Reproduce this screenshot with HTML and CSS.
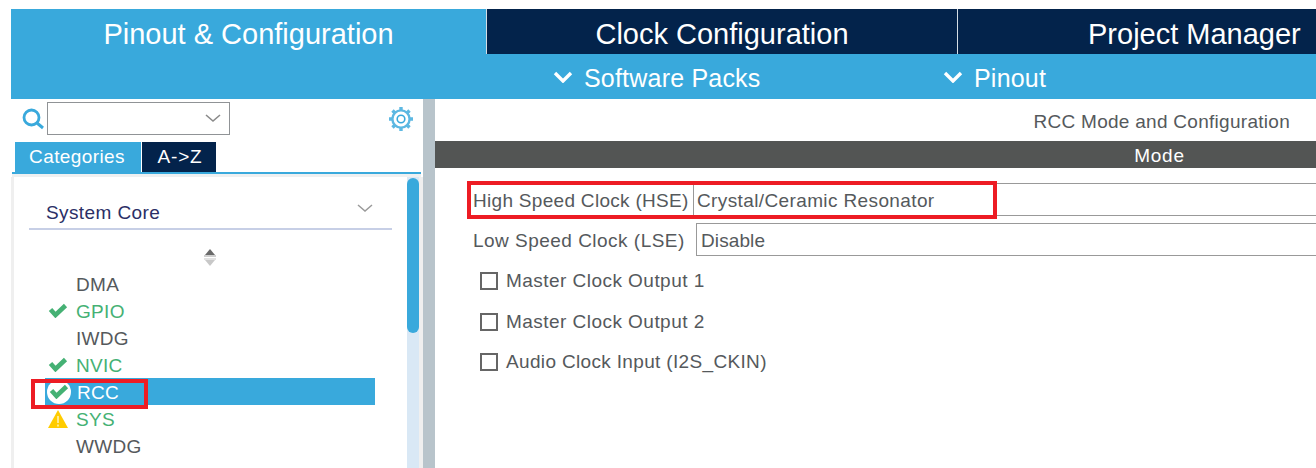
FILE: index.html
```html
<!DOCTYPE html>
<html lang="en">
<head>
<meta charset="utf-8">
<title>RCC Mode and Configuration</title>
<link rel="stylesheet" href="styles.css">
</head>
<body>
<header class="header">
  <nav class="tabs">
    <div class="tab tab-active">Pinout &amp; Configuration</div>
    <div class="tab tab-clock">Clock Configuration</div>
    <div class="tab tab-project">Project Manager</div>
  </nav>
  <div class="submenu">
    <div class="submenu-item submenu-packs">
      <svg class="submenu-chevron" viewBox="0 0 20 12"><path d="M2 2l8 8 8-8" fill="none" stroke="#fff" stroke-width="3.4"/></svg>
      <span>Software Packs</span>
    </div>
    <div class="submenu-item">
      <svg class="submenu-chevron" viewBox="0 0 20 12"><path d="M2 2l8 8 8-8" fill="none" stroke="#fff" stroke-width="3.4"/></svg>
      <span>Pinout</span>
    </div>
  </div>
</header>
<main class="main">
  <aside class="side">
    <div class="search">
      <svg class="search-icon" viewBox="0 0 22 22"><circle cx="9.5" cy="9.5" r="7.5" fill="none" stroke="#39a9dc" stroke-width="2.8"/><path d="M15 15l6 5" stroke="#39a9dc" stroke-width="3" fill="none"/></svg>
      <div class="search-box">
        <svg class="select-chevron" viewBox="0 0 16 9"><path d="M1 1l7 6 7-6" fill="none" stroke="#8a8a8a" stroke-width="1.6"/></svg>
      </div>
      <svg class="gear" viewBox="0 0 26 26">
        <circle cx="13" cy="13" r="8.6" fill="none" stroke="#5db8e2" stroke-width="2.4"/>
        <circle cx="13" cy="13" r="3.8" fill="none" stroke="#39a9dc" stroke-width="1.6"/>
        <path d="M13 1v3.500M13 21.500v3.500M1 13h3.500M21.500 13h3.500M4.500 4.500l2.500 2.500M19 19l2.500 2.500M21.500 4.500l-2.500 2.500M7 19l-2.500 2.500" stroke="#5db8e2" stroke-width="3.400" fill="none"/>
      </svg>
    </div>
    <div class="side-tabs">
      <div class="side-tab side-tab-active">Categories</div>
      <div class="side-tab side-tab-az">A-&gt;Z</div>
    </div>
    <div class="side-rule"></div>
    <div class="list-wrap">
      <div class="list">
        <div class="group">
          <span>System Core</span>
          <svg class="group-chevron" viewBox="0 0 16 9"><path d="M1 1l7 6 7-6" fill="none" stroke="#9a9a9a" stroke-width="1.500"/></svg>
        </div>
        <div class="sort">
          <svg class="sort-icon" viewBox="0 0 14 17"><path d="M7 0l5 6H2z" fill="#6a6a6a"/><path d="M1 6h12v2H1z" fill="#cfcfcf"/><path d="M1 9h12v2H1z" fill="#e2e2e2"/><path d="M2 11h10l-5 6z" fill="#c8c8c8"/></svg>
        </div>
        <ul class="items">
          <li class="item"><span class="item-icon"></span>DMA</li>
          <li class="item item-ok"><span class="item-icon"><svg class="check" viewBox="0 0 20 15"><path d="M2.500 6.500l5 5.500L17.500 2.500" fill="none" stroke="#45b174" stroke-width="4.600"/></svg></span>GPIO</li>
          <li class="item"><span class="item-icon"></span>IWDG</li>
          <li class="item item-ok"><span class="item-icon"><svg class="check" viewBox="0 0 20 15"><path d="M2.500 6.500l5 5.500L17.500 2.500" fill="none" stroke="#45b174" stroke-width="4.600"/></svg></span>NVIC</li>
          <li class="item item-selected"><span class="item-icon"><span class="check-disc"><svg class="check" viewBox="0 0 20 15"><path d="M2.500 6.500l5 5.500L17.500 2.500" fill="none" stroke="#45b174" stroke-width="4.600"/></svg></span></span><span class="item-text">RCC</span></li>
          <li class="item item-ok"><span class="item-icon"><svg class="warn" viewBox="0 0 20 18"><path d="M10 0l10 18H0z" fill="#ffcc00"/><path d="M10 6v7M10 14.500v2" stroke="#fff3c0" stroke-width="1.500" fill="none"/></svg></span>SYS</li>
          <li class="item"><span class="item-icon"></span>WWDG</li>
        </ul>
      </div>
      <div class="scrollbar"><div class="scroll-thumb"></div></div>
    </div>
    <div class="annot annot-rcc"></div>
  </aside>
  <div class="divider"></div>
  <section class="config">
    <div class="config-title">RCC Mode and Configuration</div>
    <div class="mode-bar">Mode</div>
    <div class="form">
      <div class="row row-hse">
        <label class="row-label">High Speed Clock (HSE)</label>
        <div class="field field-hse">Crystal/Ceramic Resonator</div>
      </div>
      <div class="row row-lse">
        <label class="row-label">Low Speed Clock (LSE)</label>
        <div class="field field-lse">Disable</div>
      </div>
      <div class="check-row check-row-wide"><span class="box"></span>Master Clock Output 1</div>
      <div class="check-row check-row-wide"><span class="box"></span>Master Clock Output 2</div>
      <div class="check-row"><span class="box"></span>Audio Clock Input (I2S_CKIN)</div>
    </div>
    <div class="annot annot-hse"></div>
  </section>
</main>
</body>
</html>
```
FILE: styles.css
```css
* { box-sizing: border-box; }
html, body { margin: 0; padding: 0; height: 468px; overflow: hidden; background: #fff; }
body {
  padding: 9px 0 0 11px;
  font-family: "Liberation Sans", Arial, sans-serif;
  color: #55595c;
}
.header { background: #39a9dc; height: 90px; color: #fff; }
.tabs { display: flex; height: 45px; }
.tab {
  display: flex; align-items: center; justify-content: center; padding-top: 5px;
  background: #03234b; font-size: 29px; white-space: nowrap;
}
.tab-active { background: #39a9dc; border-right: 1px solid #d5dde4; width: 476px; }
.tab-clock { width: 471px; border-right: 1px solid #d5dde4; }
.tab-project { flex: 1; justify-content: flex-start; padding-left: 130px; }
.submenu { display: flex; height: 45px; align-items: center; padding: 4px 0 0 542px; font-size: 25px; letter-spacing: 0.2px; }
.submenu-item { display: flex; align-items: center; gap: 11px; }
.submenu-packs { width: 390px; }
.submenu-chevron { width: 20px; height: 12px; margin-top: -4px; }

.main { display: flex; height: 369px; }
.side { width: 412px; position: relative; }
.search { display: flex; align-items: center; height: 43px; padding: 0 0 4px 11px; position: relative; }
.search-icon { width: 22px; height: 22px; margin-right: 3px; }
.search-box {
  width: 183px; height: 33px; border: 1px solid #909396; background: #fff;
  display: flex; align-items: center; justify-content: flex-end; padding-right: 8px;
}
.select-chevron { width: 16px; height: 9px; }
.gear { width: 26px; height: 26px; margin-left: 158px; }
.side-tabs { display: flex; height: 30px; padding-left: 4px; gap: 1px; }
.side-tab {
  width: 74px; background: #03234b; color: #fff; font-size: 19px; letter-spacing: 0.4px;
  display: flex; align-items: center; justify-content: center;
}
.side-tab-active { width: 126px; background: #39a9dc; padding-right: 2px; }
.side-tab-az { letter-spacing: 0.8px; padding-left: 2px; }
.side-rule { height: 5px; margin: 0 2px 0 1px; border-top: 2px solid #39a9dc; background: #eef0f1; }
.list-wrap { display: flex; height: 291px; background: #efefef; padding: 0 4px 0 3px; }
.list { width: 393px; background: #fff; padding: 18px 15px 0; }
.group {
  width: 363px; height: 35px; display: flex; align-items: center; justify-content: space-between;
  padding: 3px 19px 0 17px; border-bottom: 2px solid #c7cfe6;
  color: #2b2f66; font-size: 19px; letter-spacing: 0.4px;
}
.group-chevron { width: 16px; height: 9px; margin-top: -9px; }
.sort { height: 40px; display: flex; align-items: center; padding-left: 174px; }
.sort-icon { width: 14px; height: 17px; margin-top: 15px; }
.items { list-style: none; margin: 0; padding: 0 0 0 16px; }
.item {
  display: flex; align-items: center; width: 330px; height: 27px; padding-top: 2px;
  font-size: 19px; letter-spacing: 0.3px; color: #55595c;
}
.item-icon { width: 31px; display: flex; align-items: center; justify-content: center; padding-left: 1px; padding-right: 7px; margin-top: -2px; }
.item-ok { color: #45b174; }
.item-selected { background: #39a9dc; color: #fff; }
.item-text { margin-left: 1px; }
.check { width: 20px; height: 15px; display: block; flex: none; }
.warn { width: 20px; height: 18px; display: block; flex: none; }
.check-disc {
  width: 24px; height: 24px; border-radius: 50%; background: #fff; flex: none;
  display: flex; align-items: center; justify-content: center;
}
.item-selected .item-icon { justify-content: flex-start; padding-left: 2px; padding-right: 0; }
.scrollbar { width: 12px; background: #d9e8f5; }
.scroll-thumb { height: 155px; margin-top: 1px; background: #39a9dc; border-radius: 6px; }
.divider { width: 12px; background: #b8c4cb; }
.config { flex: 1; min-width: 0; position: relative; }
.config-title {
  height: 42px; display: flex; align-items: center; justify-content: flex-end;
  padding: 4px 26px 0 0; font-size: 19px; letter-spacing: 0.28px;
}
.mode-bar {
  height: 27px; background: #535554; color: #fff; font-size: 19px; letter-spacing: 0.8px; padding-top: 2px;
  display: flex; align-items: center; justify-content: center; padding-left: 568px;
}
.form { padding: 15px 0 0 38px; font-size: 19px; letter-spacing: 0.38px; }
.row { display: flex; height: 33px; align-items: center; margin-bottom: 7px; white-space: nowrap; }
.row-lse { margin-bottom: 5px; }
.row-label { flex: none; padding-top: 2px; }
.row-hse .row-label { width: 220px; letter-spacing: 0.3px; }
.row-lse .row-label { width: 223px; letter-spacing: 0.48px; }
.field { flex: 1; height: 33px; display: flex; align-items: center; padding-top: 2px; border: 1px solid #999; border-right: 0; margin-right: -1px; }
.field-hse { padding-left: 3px; }
.field-lse { padding-left: 4px; letter-spacing: 0.1px; }
.check-row { display: flex; align-items: center; height: 40.5px; padding-left: 7px; gap: 8px; white-space: nowrap; letter-spacing: 0.34px; }
.check-row-wide { letter-spacing: 0.46px; }
.box { width: 18px; height: 18px; border: 2px solid #666; flex: none; }
.annot { position: absolute; border: 4px solid #ed1c24; }
.annot-rcc { left: 20px; top: 280px; width: 117px; height: 30px; }
.annot-hse { left: 32px; top: 82px; width: 530px; height: 38px; }
```
